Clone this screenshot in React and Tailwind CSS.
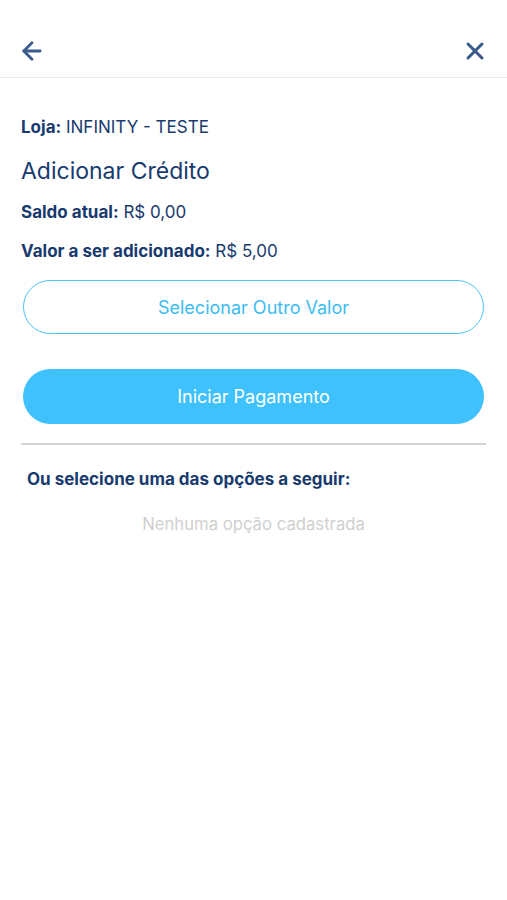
import { ArrowLeft, X } from 'lucide-react'

export default function App() {
  return (
    <div className="min-h-screen bg-white font-['Inter','Liberation_Sans',sans-serif] text-[#183a6e]">
      <div className="h-[78px] flex items-end justify-between px-[18px] pb-[12px] border-b border-[#ececec]">
        <ArrowLeft size={28} strokeWidth={2.4} className="text-[#3a5a8c]" />
        <X size={28} strokeWidth={2.6} className="text-[#3a5a8c]" />
      </div>

      <div className="px-[21px]">
        <p className="mt-[39px] text-[17px] leading-[20px]"><span className="font-bold">Loja:</span> INFINITY - TESTE</p>
        <h1 className="mt-[20px] text-[23px] leading-[28px]">Adicionar Crédito</h1>
        <p className="mt-[17px] text-[17px] leading-[20px]"><span className="font-bold">Saldo atual:</span> R$ 0,00</p>
        <p className="mt-[19px] text-[17px] leading-[20px]"><span className="font-bold">Valor a ser adicionado:</span> R$ 5,00</p>

        <div className="px-[2px]">
          <button className="mt-[19px] w-full h-[54px] rounded-full border border-[#4cc3f8] text-[#3dbcf3] text-[18px]">
            Selecionar Outro Valor
          </button>
          <button className="mt-[35px] w-full h-[55px] rounded-full bg-[#3ec1fc] text-white text-[18px]">
            Iniciar Pagamento
          </button>
        </div>

        <div className="mt-[19px] h-[2px] bg-[#d4d4d4]" />

        <p className="mt-[24px] ml-[6px] text-[17px] leading-[20px] font-bold">Ou selecione uma das opções a seguir:</p>
        <p className="mt-[25px] text-center text-[16.7px] leading-[20px] text-[#cfcfcf]">Nenhuma opção cadastrada</p>
      </div>
    </div>
  )
}
